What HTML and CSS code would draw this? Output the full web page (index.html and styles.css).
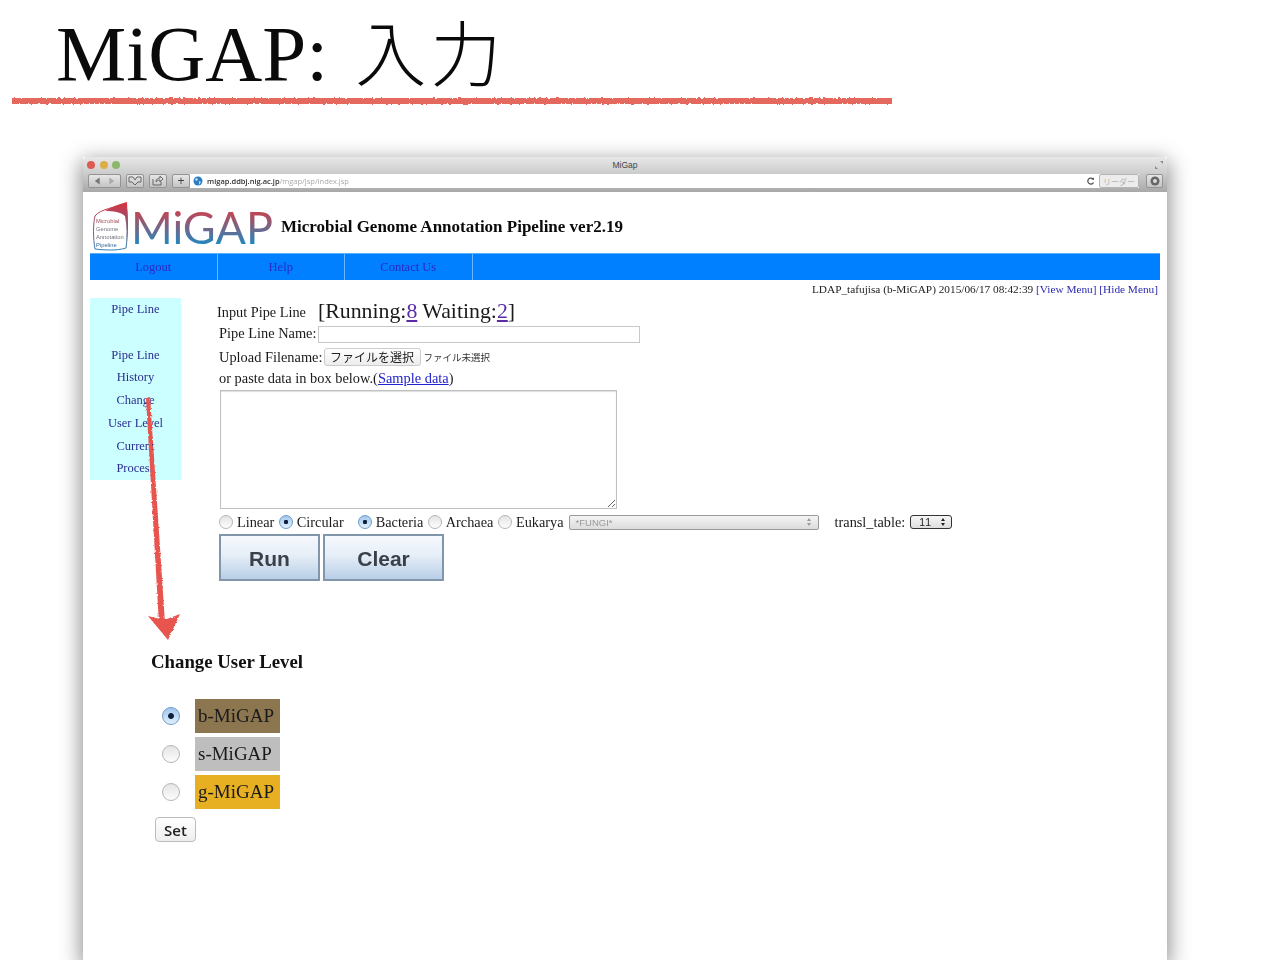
FILE: index.html
```html
<!DOCTYPE html>
<html lang="ja">
<head>
    <meta charset="UTF-8">
    <title>MiGAP: 入力</title>
    <link rel="stylesheet" href="styles.css">
</head>
<body>
    <svg class="filters" width="0" height="0">
        <filter id="rough" x="-5%" y="-50%" width="110%" height="200%">
            <feTurbulence type="fractalNoise" baseFrequency="0.4" numOctaves="2" seed="4"/>
            <feDisplacementMap in="SourceGraphic" scale="3"/>
        </filter>
        <linearGradient id="logo-shape" x1="0" y1="0" x2="0" y2="1">
            <stop offset="0" stop-color="#d9323f"/>
            <stop offset="1" stop-color="#2f7fb5"/>
        </linearGradient>
    </svg>

    <h1 class="slide-title">MiGAP:<span class="slide-title-jp">入力</span></h1>
    <svg class="slide-rule" width="884" height="10">
        <rect x="1" y="2" width="880" height="6" fill="#e5675f" filter="url(#rough)"/>
    </svg>

    <div class="window">
        <div class="titlebar">
            <div class="lights">
                <span class="light red"></span>
                <span class="light yellow"></span>
                <span class="light green"></span>
            </div>
            <div class="window-title">MiGap</div>
            <svg class="expand" width="10" height="10" viewBox="0 0 10 10">
                <path d="M1 9V6l3 3zM9 1v3L6 1z" fill="#8a8a8a"/>
            </svg>
        </div>
        <div class="toolbar">
            <div class="tool tool-nav">
                <svg width="32" height="10" viewBox="0 0 32 10">
                    <path d="M6 5l5-3.500v7z" fill="#777"/>
                    <path d="M26 5l-5-3.500v7z" fill="#aaa"/>
                </svg>
            </div>
            <div class="tool tool-small">
                <svg width="14" height="10" viewBox="0 0 14 10">
                    <path d="M1 1h4l2 3 2-3h4v5h-3l-3 3-3-3H1z" fill="none" stroke="#666"/>
                </svg>
            </div>
            <div class="tool tool-small">
                <svg width="12" height="10" viewBox="0 0 12 10">
                    <path d="M1 3v6h8V6M4 6c0-3 2-4 4-4V0l3 3-3 3V4C6 4 5 5 4 6z" fill="none" stroke="#666"/>
                </svg>
            </div>
            <div class="tool tool-plus">+</div>
            <div class="address">
                <svg width="10" height="10" viewBox="0 0 10 10">
                    <circle cx="5" cy="5" r="4.500" fill="#2c7cc4"/>
                    <path d="M3 2l2 1-1 2-2-1zM6 5l2 1-2 3z" fill="#bfe0f5"/>
                </svg>
                <span class="url">migap.ddbj.nig.ac.jp<span class="url-path">/mgap/jsp/index.jsp</span></span>
                <svg class="reload" width="8" height="8" viewBox="0 0 8 8">
                    <path d="M6.500 5.500A3 3 0 1 1 6 2" fill="none" stroke="#555" stroke-width="1.300"/>
                    <path d="M4.500 2.500L7 3V0.500z" fill="#555"/>
                </svg>
                <div class="reader">リーダー</div>
            </div>
            <div class="tool tool-download">
                <svg width="10" height="10" viewBox="0 0 10 10">
                    <circle cx="5" cy="5" r="4.500" fill="#666"/>
                    <circle cx="5" cy="5" r="2" fill="#ddd"/>
                </svg>
            </div>
        </div>

        <div class="page">
            <div class="page-header">
                <svg class="logo-mark" width="37" height="52" viewBox="0 0 37 52">
                    <path d="M34 3C24 6 8 8 3 15c-2 8-2 22 0 33 8 1 22 2 31-1 2-14 2-30 0-44z" fill="#fff" stroke="url(#logo-shape)" stroke-width="1"/>
                    <path d="M35 1C27 3 19 6 13 10c8 0 16 1 20 5 2 10 2 22 1 32 2-14 2-30 1-46z" fill="url(#logo-shape)"/>
                    <text x="4" y="22" class="logo-mark-text logo-text-red">Microbial</text>
                    <text x="4" y="30" class="logo-mark-text">Genome</text>
                    <text x="4" y="38" class="logo-mark-text">Annotation</text>
                    <text x="4" y="46" class="logo-mark-text logo-text-blue">Pipeline</text>
                </svg>
                <span class="logo-word">MiGAP</span>
                <span class="page-title">Microbial Genome Annotation Pipeline ver2.19</span>
            </div>

            <div class="nav">
                <a class="nav-item">Logout</a>
                <a class="nav-item">Help</a>
                <a class="nav-item">Contact Us</a>
            </div>

            <div class="status">
                LDAP_tafujisa (b-MiGAP) 2015/06/17 08:42:39 <a class="menu-link">[View Menu]</a> <a class="menu-link">[Hide Menu]</a>
            </div>

            <div class="main">
                <div class="sidebar">
                    <div class="side-item side-item-tall">Pipe Line</div>
                    <div class="side-item">Pipe Line</div>
                    <div class="side-item">History</div>
                    <div class="side-item">Change</div>
                    <div class="side-item">User Level</div>
                    <div class="side-item">Current</div>
                    <div class="side-item">Process</div>
                </div>

                <div class="input-form">
                    <div class="form-heading">
                        <span class="form-heading-label">Input Pipe Line</span>
                        <span class="form-heading-count">[Running:<a class="count-link">8</a> Waiting:<a class="count-link">2</a>]</span>
                    </div>
                    <div class="form-row form-row-name">
                        <label>Pipe Line Name:</label>
                        <input class="name-input" type="text">
                    </div>
                    <div class="form-row form-row-upload">
                        <label>Upload Filename:</label>
                        <button class="file-button">ファイルを選択</button>
                        <span class="file-none">ファイル未選択</span>
                    </div>
                    <div class="form-row-paste">or paste data in box below.(<a class="sample-link">Sample data</a>)</div>
                    <textarea class="paste-box"></textarea>
                    <div class="options">
                        <input class="radio" type="radio" name="shape"><span class="opt">Linear</span>
                        <input class="radio" type="radio" name="shape" checked><span class="opt opt-gap">Circular</span>
                        <input class="radio" type="radio" name="domain" checked><span class="opt">Bacteria</span>
                        <input class="radio" type="radio" name="domain"><span class="opt">Archaea</span>
                        <input class="radio" type="radio" name="domain"><span class="opt opt-last">Eukarya</span>
                        <div class="select-wide">
                            <span>*FUNGI*</span>
                            <svg width="6" height="10" viewBox="0 0 6 10"><path d="M3 1l2 3H1zM3 9L1 6h4z" fill="#999"/></svg>
                        </div>
                        <span class="opt transl-label">transl_table:</span>
                        <div class="select-small">
                            <span>11</span>
                            <svg width="6" height="10" viewBox="0 0 6 10"><path d="M3 1l2 3H1zM3 9L1 6h4z" fill="#222"/></svg>
                        </div>
                    </div>
                    <div class="actions">
                        <button class="big-button big-run">Run</button>
                        <button class="big-button big-clear">Clear</button>
                    </div>
                </div>
            </div>

            <div class="level">
                <h2 class="level-title">Change User Level</h2>
                <div class="level-row">
                    <input class="radio radio-big" type="radio" name="level" checked>
                    <span class="level-tag tag-b">b-MiGAP</span>
                </div>
                <div class="level-row">
                    <input class="radio radio-big" type="radio" name="level">
                    <span class="level-tag tag-s">s-MiGAP</span>
                </div>
                <div class="level-row">
                    <input class="radio radio-big" type="radio" name="level">
                    <span class="level-tag tag-g">g-MiGAP</span>
                </div>
                <button class="set-button">Set</button>
            </div>
        </div>
    </div>

    <!-- hand drawn arrow sits on top of the sidebar -->
    <svg class="arrow" width="60" height="260" viewBox="0 0 60 260">
        <g fill="#e8544f" filter="url(#rough)">
            <path d="M14 6l4-1 15 226-6 1z"/>
            <path d="M16 224l12 3h7l13-5-12 26z"/>
        </g>
    </svg>
</body>
</html>
```

FILE: styles.css
```css
* {
    box-sizing: border-box;
}

html, body {
    margin: 0;
    height: 960px;
    overflow: hidden;
}

body {
    background: white;
    font-family: "Liberation Serif", "Noto Sans CJK JP", serif;
    color: #111;
    position: relative;
}

.filters {
    position: absolute;
}

.slide-title {
    margin: 0;
    height: 96px;
    padding: 4px 0 0 56px;
    font-size: 79px;
    line-height: 90px;
    font-weight: normal;
    color: #0a0a0a;
    white-space: nowrap;
}

.slide-title-jp {
    margin-left: 27px;
    font-family: "Noto Sans CJK JP", sans-serif;
    font-weight: 300;
    font-size: 71px;
    letter-spacing: 4px;
}

.slide-rule {
    display: block;
    margin-left: 11px;
}

/* browser window */
.window {
    margin: 51px 0 0 83px;
    width: 1084px;
    height: 803px;
    background: white;
    box-shadow: 0 6px 20px 2px rgba(0, 0, 0, 0.45);
    filter: blur(0.5px);
}

.titlebar {
    height: 16px;
    display: flex;
    align-items: center;
    position: relative;
    background: linear-gradient(#e8e8e8, #cdcdcd);
    border-radius: 4px 4px 0 0;
    padding-left: 4px;
}

.lights {
    display: flex;
    gap: 4.500px;
}

.light {
    width: 8px;
    height: 8px;
    border-radius: 50%;
}

.light.red { background: #dd5a52; }
.light.yellow { background: #dcae48; }
.light.green { background: #8cb86c; }

.window-title {
    flex: 1;
    text-align: center;
    font-family: "Liberation Sans", sans-serif;
    font-size: 8.500px;
    color: #444;
    padding-right: 24px;
}

.expand {
    margin-right: 3px;
}

.toolbar {
    height: 19px;
    display: flex;
    align-items: flex-start;
    gap: 5px;
    padding: 1px 4px 0 5px;
    background: linear-gradient(#cdcdcd, #a8a8a8);
}

.tool {
    height: 14px;
    display: flex;
    align-items: center;
    justify-content: center;
    background: linear-gradient(#e6e6e6, #c4c4c4);
    border: 1px solid #949494;
    border-radius: 2px;
}

.tool-nav { width: 33px; }
.tool-small { width: 18px; }
.tool-download { width: 17px; margin-left: 2px; }

.tool-plus {
    width: 18px;
    margin-right: -5px;
    font-family: "Liberation Sans", sans-serif;
    font-size: 12px;
    color: #444;
}

.address {
    flex: 1;
    height: 14px;
    display: flex;
    align-items: center;
    gap: 4px;
    padding-left: 3px;
    background: white;
}

.url {
    flex: 1;
    font-family: "Open Sans", sans-serif;
    font-size: 7.500px;
    font-weight: 600;
    color: #333;
}

.url-path {
    color: #aaa;
    font-weight: normal;
}

.reader {
    width: 40px;
    height: 14px;
    text-align: center;
    font-family: "Noto Sans CJK JP", sans-serif;
    font-size: 8px;
    line-height: 13px;
    color: #b5b5b5;
    background: #ececec;
    border: 1px solid #b5b5b5;
    border-radius: 2px;
}

/* page inside the window */
.page {
    padding: 0 7px;
    height: 768px;
}

.page-header {
    height: 61px;
    display: flex;
    align-items: flex-end;
    padding: 0 0 0 2px;
}

.logo-mark-text {
    font-family: "Liberation Sans", sans-serif;
    font-size: 5.800px;
    fill: #70747f;
}

.logo-text-red { fill: #a5505a; }
.logo-text-blue { fill: #35689a; }

.logo-word {
    margin: 0 8px 1px 2px;
    font-family: "Lato", sans-serif;
    font-size: 45px;
    line-height: 50px;
    font-weight: 400;
    background: linear-gradient(#d0404a 15%, #1f88c0 85%);
    -webkit-background-clip: text;
    background-clip: text;
    color: transparent;
}

.page-title {
    margin-bottom: 16px;
    font-size: 17px;
    font-weight: bold;
    color: #0a0a0a;
}

.nav {
    height: 27px;
    display: flex;
    background: #007fff;
    border-top: 1px solid #55b0ff;
}

.nav-item {
    width: 127.500px;
    text-align: center;
    font-size: 12.500px;
    line-height: 26px;
    color: #2a2ac4;
    border-right: 1px solid #6ab8ff;
}

.status {
    padding: 2px 2px 0 0;
    text-align: right;
    font-size: 11.300px;
    line-height: 14px;
    color: #222;
}

.menu-link {
    color: #2a2ab0;
}

.main {
    display: flex;
    align-items: flex-start;
    margin-top: 2px;
}

.sidebar {
    width: 91px;
    background: #ccffff;
}

.side-item {
    height: 22.800px;
    text-align: center;
    font-size: 12.500px;
    line-height: 22.800px;
    color: #2d2d90;
}

.side-item-tall {
    height: 45.500px;
}

.input-form {
    margin-left: 36px;
    font-size: 14.400px;
    color: #1a1a1a;
}

.form-heading {
    height: 28px;
    display: flex;
    align-items: flex-end;
}

.form-heading-label {
    width: 101px;
    font-size: 14.300px;
    line-height: 15px;
    margin-bottom: 6px;
}

.form-heading-count {
    font-size: 21.800px;
    line-height: 26px;
    margin-bottom: 2px;
}

.count-link {
    color: #5a2aa8;
    text-decoration: underline;
}

.form-row {
    display: flex;
    align-items: center;
    padding-left: 2px;
}

.form-row-name {
    height: 17px;
}

.form-row-name label {
    margin-bottom: 2px;
}

.name-input {
    width: 322px;
    height: 17px;
    margin-left: 1px;
    border: 1px solid #c8c8c8;
    background: white;
}

.form-row-upload {
    height: 18px;
    margin-top: 5px;
}

.file-button {
    width: 97px;
    height: 18px;
    margin-left: 1px;
    padding: 0;
    font-family: "Noto Sans CJK JP", sans-serif;
    font-size: 12px;
    line-height: 16px;
    color: #222;
    background: linear-gradient(#fff, #ececec);
    border: 1px solid #ccc;
    border-radius: 3px;
}

.file-none {
    margin-left: 3px;
    font-family: "Noto Sans CJK JP", sans-serif;
    font-size: 9.500px;
    color: #333;
}

.form-row-paste {
    height: 18px;
    margin-top: 3px;
    padding-left: 2px;
    line-height: 18px;
}

.sample-link {
    color: #2222cc;
    text-decoration: underline;
}

.paste-box {
    display: block;
    width: 397px;
    height: 119px;
    margin: 3px 0 0 3px;
    border: 1px solid #c0c0c0;
    box-shadow: inset 0 1px 1px #ddd;
    background: white;
}

.options {
    display: flex;
    align-items: center;
    height: 20px;
    width: 760px;
    margin: 3px 0 0 2px;
}

.radio {
    appearance: none;
    -webkit-appearance: none;
    flex: none;
    width: 14px;
    height: 14px;
    margin: 0 4px 0 0;
    border-radius: 50%;
    border: 1px solid #b5b5b5;
    background: linear-gradient(#e4e4e4, #fdfdfd);
}

.radio:checked {
    border-color: #6f9bcb;
    background: radial-gradient(circle, #10203c 0 22%, transparent 30%), linear-gradient(#a0c7ee, #e2f0fb);
}

.opt {
    margin-right: 4.500px;
    font-size: 14.300px;
}

.opt-gap { margin-right: 14px; }
.opt-last { margin-right: 5px; }

.select-wide {
    width: 250px;
    height: 15px;
    flex: none;
    display: flex;
    align-items: center;
    justify-content: space-between;
    padding: 0 6px;
    font-family: "Liberation Sans", sans-serif;
    font-size: 9.500px;
    color: #999;
    background: linear-gradient(#f4f4f4, #dcdcdc);
    border: 1px solid #999;
    border-radius: 2px;
}

.transl-label {
    margin: 0 5px 0 16px;
}

.select-small {
    width: 42px;
    height: 14px;
    flex: none;
    display: flex;
    align-items: center;
    justify-content: space-between;
    padding: 0 5px 0 8px;
    font-family: "Liberation Sans", sans-serif;
    font-size: 10.500px;
    letter-spacing: 1px;
    color: #222;
    background: linear-gradient(#f6f6f6, #dedede);
    border: 1px solid #333;
    border-radius: 3px;
}

.actions {
    display: flex;
    gap: 3px;
    margin: 2px 0 0 2px;
}

.big-button {
    height: 47px;
    padding: 3px 0 0;
    font-family: "Liberation Sans", sans-serif;
    font-size: 21px;
    font-weight: bold;
    color: #3a3f48;
    background: linear-gradient(#f6f9fd, #e6eef7 45%, #b8cfe7);
    border: 2px solid #8296ab;
}

.big-run { width: 101px; }
.big-clear { width: 121px; }

.level {
    padding: 70px 0 0 61px;
}

.level-title {
    margin: 0;
    font-size: 18.800px;
    line-height: 22px;
    color: #111;
}

.level-row {
    display: flex;
    align-items: center;
    height: 34px;
    margin-bottom: 4px;
}

.level-row:first-of-type {
    margin-top: 26px;
}

.radio-big {
    width: 18px;
    height: 18px;
    margin: 0 15px 0 11px;
}

.level-tag {
    width: 85px;
    height: 34px;
    padding-left: 3px;
    font-size: 19px;
    line-height: 33px;
    color: #1a1a1a;
}

.tag-b { background: #8c7650; }
.tag-s { background: #bebebe; }
.tag-g { background: #e6b022; }

.set-button {
    display: block;
    width: 41px;
    height: 25px;
    margin: 8px 0 0 4px;
    padding: 0;
    font-family: "Open Sans", sans-serif;
    font-size: 15px;
    font-weight: 600;
    color: #222;
    background: linear-gradient(#fff, #eee);
    border: 1px solid #bbb;
    border-radius: 4px;
}

/* sketched over the slide, not part of the page */
.arrow {
    position: absolute;
    left: 132px;
    top: 392px;
}
```
